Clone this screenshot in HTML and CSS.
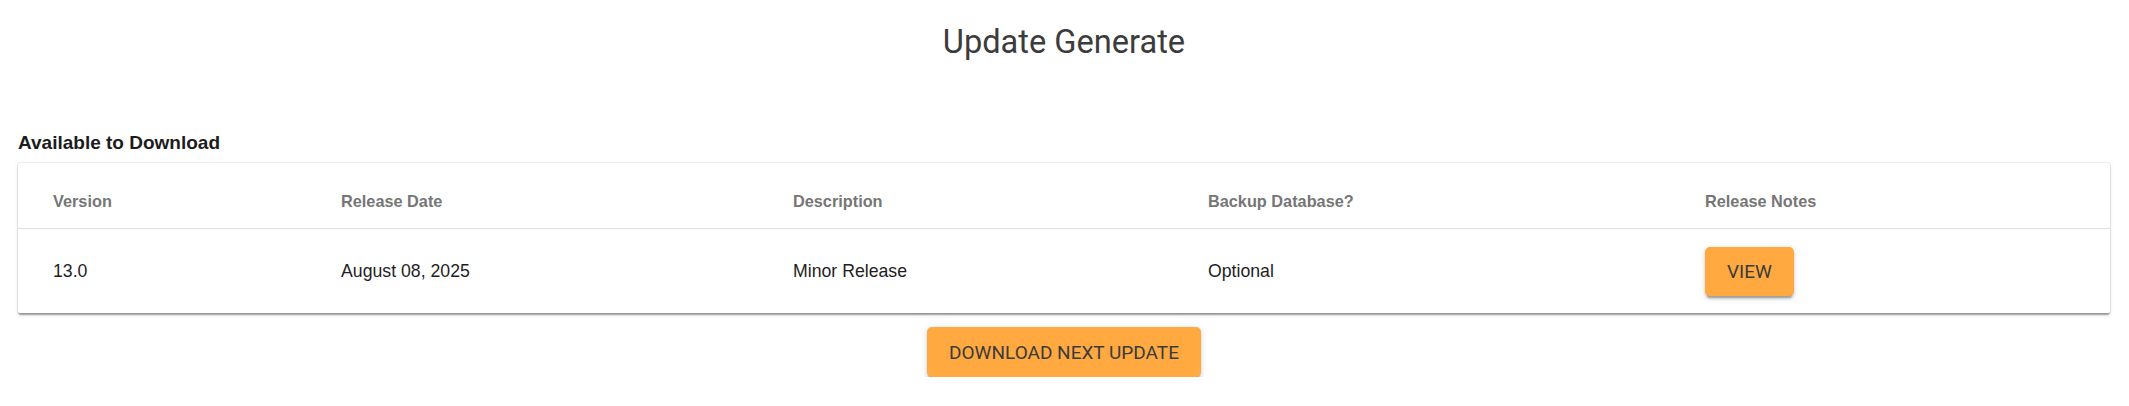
FILE: index.html
```html
<!DOCTYPE html>
<html lang="en">
<head>
<meta charset="utf-8">
<title>Update Generate</title>
<link rel="stylesheet" href="styles.css">
</head>
<body>
<div class="page">
  <h1 class="title">Update Generate</h1>
  <h2 class="section-title">Available to Download</h2>
  <div class="card">
    <div class="row head-row">
      <div class="cell">Version</div>
      <div class="cell">Release Date</div>
      <div class="cell">Description</div>
      <div class="cell">Backup Database?</div>
      <div class="cell">Release Notes</div>
    </div>
    <div class="row data-row">
      <div class="cell">13.0</div>
      <div class="cell">August 08, 2025</div>
      <div class="cell">Minor Release</div>
      <div class="cell">Optional</div>
      <div class="cell"><button class="btn btn-view">VIEW</button></div>
    </div>
  </div>
  <div class="actions">
    <button class="btn btn-download">DOWNLOAD NEXT UPDATE</button>
  </div>
</div>
</body>
</html>
```

FILE: styles.css
```css
html, body {
  margin: 0;
  padding: 0;
  background: #ffffff;
}

.page {
  padding: 23px 19px 0 18px;
  font-family: "Liberation Sans", Arial, sans-serif;
}

.title {
  margin: 0;
  text-align: center;
  font-family: Roboto, "Liberation Sans", sans-serif;
  font-weight: 400;
  font-size: 32.6px;
  line-height: normal;
  color: #3c3c3c;
}

.section-title {
  margin: 71px 0 9px 0;
  font-family: "Liberation Sans", Arial, sans-serif;
  font-weight: 700;
  font-size: 19px;
  line-height: 22px;
  color: #1c1c1c;
}

.card {
  background: #ffffff;
  border-radius: 2px;
  box-shadow: 0 0 0 1px rgba(0, 0, 0, 0.04),
              0 2.7px 1.4px -1.4px rgba(0, 0, 0, 0.2),
              0 1.4px 1.4px 0 rgba(0, 0, 0, 0.14),
              0 1.4px 4px 0 rgba(0, 0, 0, 0.12);
}

.row {
  display: grid;
  grid-template-columns: 288px 452px 415px 497px 1fr;
  padding-left: 35px;
}

.head-row {
  height: 65px;
  border-bottom: 1px solid #e0e0e0;
  align-items: start;
}

.head-row .cell {
  padding-top: 29px;
  font-weight: 700;
  font-size: 16.3px;
  line-height: 19px;
  color: #767676;
}

.data-row {
  height: 84px;
  align-items: center;
}

.data-row .cell {
  font-size: 17.7px;
  line-height: 21px;
  color: #1e1e1e;
}

.btn {
  display: inline-flex;
  align-items: center;
  justify-content: center;
  border: none;
  margin: 0;
  padding: 0 22px;
  background: #ffa940;
  color: #3b3b3b;
  font-family: Roboto, "Liberation Sans", sans-serif;
  font-weight: 400;
  font-size: 19px;
  border-radius: 5px;
  box-shadow: 0 4px 1.4px -2.7px rgba(0, 0, 0, 0.2),
              0 2.7px 2.7px 0 rgba(0, 0, 0, 0.14),
              0 1.4px 6.8px 0 rgba(0, 0, 0, 0.12);
  cursor: pointer;
}

.btn-view {
  height: 49px;
  margin-top: 1px;
}

.actions {
  display: flex;
  justify-content: center;
  padding-top: 14px;
}

.btn-download {
  height: 50px;
}
```
